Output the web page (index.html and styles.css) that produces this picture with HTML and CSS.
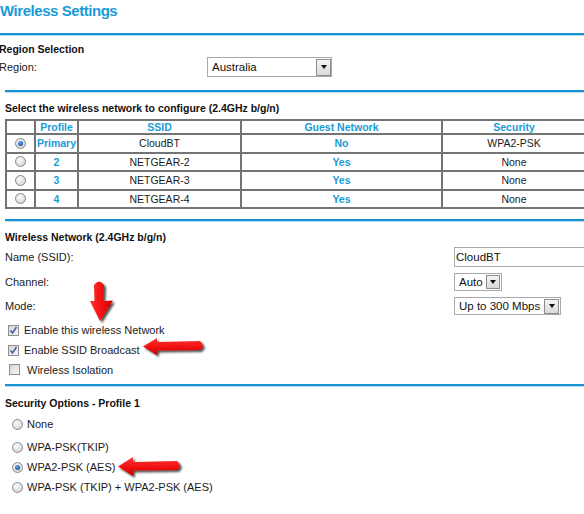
FILE: index.html
```html
<!DOCTYPE html>
<html>
<head>
<meta charset="utf-8">
<link rel="stylesheet" href="styles.css">
</head>
<body>
<div class="page">
  <div class="title">Wireless Settings</div>
  <div class="rule"></div>

  <section class="region">
    <div class="head">Region Selection</div>
    <div class="region-row">
      <span class="region-label">Region:</span>
      <div class="select sel-region"><span class="val">Australia</span><span class="btn"><i></i></span></div>
    </div>
  </section>

  <div class="rule inset r2"></div>
  <div class="head sel-head">Select the wireless network to configure (2.4GHz b/g/n)</div>

  <table class="profiles">
    <colgroup>
      <col class="c1"><col class="c2"><col class="c3"><col class="c4"><col class="c5">
    </colgroup>
    <tr class="hdr">
      <th></th><th>Profile</th><th>SSID</th><th>Guest Network</th><th>Security</th>
    </tr>
    <tr>
      <td><span class="radio on"></span></td><td class="blue">Primary</td><td>CloudBT</td><td class="blue">No</td><td>WPA2-PSK</td>
    </tr>
    <tr>
      <td><span class="radio"></span></td><td class="blue">2</td><td>NETGEAR-2</td><td class="blue">Yes</td><td>None</td>
    </tr>
    <tr>
      <td><span class="radio"></span></td><td class="blue">3</td><td>NETGEAR-3</td><td class="blue">Yes</td><td>None</td>
    </tr>
    <tr>
      <td><span class="radio"></span></td><td class="blue">4</td><td>NETGEAR-4</td><td class="blue">Yes</td><td>None</td>
    </tr>
  </table>

  <div class="rule inset r3"></div>

  <section class="wireless">
    <div class="head wl-head">Wireless Network (2.4GHz b/g/n)</div>
    <div class="form">
      <span class="flabel">Name (SSID):</span>
      <div class="ctrl"><div class="textbox">CloudBT</div></div>
      <span class="flabel">Channel:</span>
      <div class="ctrl"><div class="select sel-chan"><span class="val">Auto</span><span class="btn"><i></i></span></div></div>
      <span class="flabel">Mode:</span>
      <div class="ctrl"><div class="select sel-mode"><span class="val">Up to 300 Mbps</span><span class="btn"><i></i></span></div></div>
    </div>
    <div class="checks">
      <div class="chk-row"><span class="chk on"><svg viewBox="0 0 11 11" width="11" height="11"><path d="M2.5 5.5 L4.5 8 L8.5 2" fill="none" stroke="#4a5e99" stroke-width="1.6"/></svg></span><span>Enable this wireless Network</span></div>
      <div class="chk-row"><span class="chk on"><svg viewBox="0 0 11 11" width="11" height="11"><path d="M2.5 5.5 L4.5 8 L8.5 2" fill="none" stroke="#4a5e99" stroke-width="1.6"/></svg></span><span>Enable SSID Broadcast</span></div>
      <div class="chk-row iso"><span class="chk"></span><span>Wireless Isolation</span></div>
    </div>
  </section>

  <div class="rule inset r4"></div>

  <section class="security">
    <div class="head sec-head">Security Options - Profile 1</div>
    <div class="opt first"><span class="radio"></span><span>None</span></div>
    <div class="opt tkip"><span class="radio"></span><span>WPA-PSK(TKIP)</span></div>
    <div class="opt"><span class="radio on"></span><span>WPA2-PSK (AES)</span></div>
    <div class="opt"><span class="radio"></span><span>WPA-PSK (TKIP) + WPA2-PSK (AES)</span></div>
  </section>

  <svg class="arrows" width="584" height="514" viewBox="0 0 584 514">
    <defs>
      <linearGradient id="rv" x1="0" y1="0" x2="1" y2="0">
        <stop offset="0" stop-color="#ff3030"/>
        <stop offset="0.5" stop-color="#f41010"/>
        <stop offset="1" stop-color="#c80000"/>
      </linearGradient>
      <linearGradient id="rh" x1="0" y1="0" x2="0" y2="1">
        <stop offset="0" stop-color="#ff3535"/>
        <stop offset="0.55" stop-color="#f01010"/>
        <stop offset="1" stop-color="#c00000"/>
      </linearGradient>
      <filter id="sh" x="-30%" y="-30%" width="160%" height="160%">
        <feGaussianBlur in="SourceAlpha" stdDeviation="1.2"/>
        <feOffset dx="1.5" dy="2" result="b"/>
        <feComponentTransfer><feFuncA type="linear" slope="0.7"/></feComponentTransfer>
        <feMerge><feMergeNode/><feMergeNode in="SourceGraphic"/></feMerge>
      </filter>
    </defs>
    <path filter="url(#sh)" fill="url(#rv)" d="M94 285 Q99 278 104 285 L103.5 301 L113 300.5 L100 321 L90 301 L94.5 301 Z"/>
    <path filter="url(#sh)" fill="url(#rh)" d="M143 346.5 L157 338 L157 342 L200 341 Q205.5 345.5 200 350 L157 350.5 L157 355 Z"/>
    <path filter="url(#sh)" fill="url(#rh)" d="M118 466.5 L133 457 L133 462 L177 461 Q182.5 465.5 177 470 L133 470.5 L133 476 Z"/>
  </svg>
</div>
</body>
</html>
```

FILE: styles.css
```css
html, body {
  margin: 0;
  padding: 0;
  background: #fff;
}
body {
  width: 584px;
  height: 514px;
  overflow: hidden;
  font-family: "Liberation Sans", Arial, sans-serif;
  font-size: 11px;
  color: #1b1b1b;
}
.page {
  position: relative;
  width: 584px;
  height: 514px;
}
.title {
  height: 33px;
  line-height: 22px;
  margin-left: 0;
  font-size: 15px;
  letter-spacing: -0.45px;
  font-weight: bold;
  color: #1a9bd7;
}
.rule {
  height: 3px;
  background: linear-gradient(#1893d0 0 2px, #b3def3 2px 3px);
}
.rule.inset {
  margin-left: 5px;
}
.head {
  font-weight: bold;
  font-size: 10.5px;
  line-height: 16px;
  color: #111;
}
.region {
  margin-left: -1px;
  padding-top: 5px;
  height: 49px;
}
.region-row {
  display: flex;
  align-items: center;
  height: 20px;
}
.region-label {
  width: 208px;
}
.select {
  display: flex;
  align-items: center;
  box-sizing: border-box;
  border: 1px solid #a9a9a9;
  background: #fff;
  font-size: 11.5px;
  color: #111;
}
.select .val {
  flex: 1;
  padding-left: 4px;
  white-space: nowrap;
}
.select .btn {
  box-sizing: border-box;
  width: 15px;
  height: 100%;
  border: 1px solid #8d8d8d;
  background: linear-gradient(#f4f4f4, #dadada);
  display: flex;
  align-items: center;
  justify-content: center;
}
.select .btn i {
  width: 0;
  height: 0;
  border-left: 3.5px solid transparent;
  border-right: 3.5px solid transparent;
  border-top: 4px solid #111;
}
.sel-region {
  width: 125px;
  height: 20px;
}
.sel-region .btn {
  height: 17px;
}
.r2 {
  margin-top: 0;
}
.sel-head {
  margin-top: 8px;
  margin-left: 5px;
  line-height: 14px;
}
.profiles {
  margin-top: 4px;
  margin-left: 5px;
  width: 580px;
  table-layout: fixed;
  border-collapse: collapse;
  border: 2px solid #747474;
}
.c1 { width: 29px; }
.c2 { width: 43px; }
.c3 { width: 163px; }
.c4 { width: 201px; }
.c5 { width: 144px; }
.profiles th,
.profiles td {
  border: 2px solid #747474;
  padding: 0;
  text-align: center;
  font-size: 10.5px;
  white-space: nowrap;
  overflow: hidden;
}
.profiles th {
  height: 12px;
  line-height: 12px;
  font-weight: bold;
  color: #1a9bd7;
}
.profiles td {
  height: 16.5px;
  line-height: 16px;
}
.profiles td.blue {
  color: #1a9bd7;
  font-weight: bold;
}
.radio {
  display: inline-block;
  box-sizing: border-box;
  width: 11px;
  height: 11px;
  border-radius: 50%;
  border: 1px solid #8a8a8a;
  background: radial-gradient(circle at 40% 35%, #fafafa 0, #e2e2e2 55%, #c8c8c8 100%);
  vertical-align: middle;
  position: relative;
}
.radio.on::after {
  content: "";
  position: absolute;
  left: 2px;
  top: 2px;
  width: 5px;
  height: 5px;
  border-radius: 50%;
  background: radial-gradient(circle at 40% 35%, #6fa7e6 0, #2b63b8 60%, #1a3f80 100%);
}
.profiles td .radio {
  margin-top: -2px;
}
.r3 {
  margin-top: 10px;
}
.wireless {
  padding-left: 5px;
}
.wl-head {
  margin-top: 7px;
}
.form {
  display: grid;
  grid-template-columns: 449px 1fr;
  grid-template-rows: 20px 18px 18px;
  row-gap: 6px;
  margin-top: 2px;
  align-items: center;
}
.ctrl {
  height: 100%;
  display: flex;
  align-items: center;
}
.textbox {
  box-sizing: border-box;
  width: 140px;
  height: 20px;
  border: 1px solid #a9a9a9;
  font-size: 11.5px;
  line-height: 18px;
  padding-left: 1px;
  color: #111;
}
.sel-chan {
  width: 48px;
  height: 18px;
}
.sel-chan .btn {
  width: 14px;
  height: 14px;
  margin-right: 1px;
}
.sel-mode {
  width: 107px;
  height: 18px;
}
.sel-mode .btn {
  width: 15px;
  height: 15px;
  margin-right: 1px;
}
.checks {
  margin-top: 5px;
}
.chk-row {
  display: flex;
  align-items: center;
  height: 20px;
  gap: 5px;
  padding-left: 3px;
}
.chk-row:nth-child(3) {
  height: 19px;
}
.chk-row.iso {
  gap: 7px;
  padding-left: 4px;
}
.chk {
  box-sizing: border-box;
  width: 11px;
  height: 11px;
  border: 1px solid #8f8f8f;
  background: linear-gradient(135deg, #d6d6d6, #f7f7f7);
  display: flex;
  align-items: center;
  justify-content: center;
}
.chk svg {
  display: block;
  margin: -1px;
}
.r4 {
  margin-top: 5px;
}
.security {
  padding-left: 5px;
}
.sec-head {
  margin-top: 8px;
}
.opt {
  display: flex;
  align-items: center;
  height: 20px;
  gap: 4px;
  padding-left: 7px;
}
.opt.first {
  margin-top: 3px;
}
.opt.tkip {
  margin-top: 3px;
}
.arrows {
  position: absolute;
  left: 0;
  top: 0;
  pointer-events: none;
}
```
